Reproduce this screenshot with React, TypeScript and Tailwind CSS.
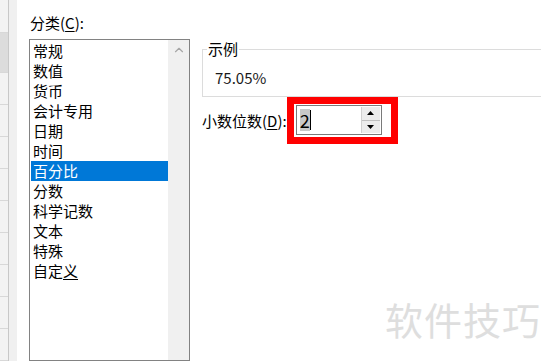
import { ChevronUp } from "lucide-react";

const categories = [
  "常规",
  "数值",
  "货币",
  "会计专用",
  "日期",
  "时间",
  "百分比",
  "分数",
  "科学记数",
  "文本",
  "特殊",
  "自定义",
];

function SheetEdge() {
  return (
    <div className="flex h-full shrink-0">
      <div className="flex w-[8px] flex-col bg-[#f3f3f3]">
        <div className="h-[33px] border-b border-[#d8d8d8]" />
        <div className="h-[40px] border-b border-[#d8d8d8] bg-[#dcdcdc]" />
        {Array.from({ length: 9 }).map((_, i) => (
          <div key={i} className="h-[32px] border-b border-[#d8d8d8]" />
        ))}
      </div>
      <div className="w-px bg-[#c8c8c8]" />
      <div className="w-[8px] bg-[#f0f0f0]" />
    </div>
  );
}

export default function App() {
  return (
    <div
      className="flex h-[361px] w-[541px] overflow-hidden bg-white text-[15px] leading-[20px] text-black"
      style={{ fontFamily: '"Noto Sans CJK SC", "Noto Sans", sans-serif' }}
    >
      <SheetEdge />

      {/* 分类 */}
      <div className="ml-[12px] flex w-[161px] shrink-0 flex-col pt-[13px]">
        <div className="mb-[6px] pl-px">
          分类(<span className="underline underline-offset-2">C</span>):
        </div>
        <div className="flex flex-1 border border-[#828282] bg-white">
          <ul className="flex flex-1 flex-col pt-px pl-px">
            {categories.map((c) => (
              <li
                key={c}
                className={
                  c === "百分比"
                    ? "h-[20px] bg-[#0078d7] pl-[2px] text-white"
                    : "h-[20px] pl-[2px]"
                }
              >
                {c === "自定义" ? (
                  <span>
                    自定<span className="underline underline-offset-2">义</span>
                  </span>
                ) : (
                  c
                )}
              </li>
            ))}
          </ul>
          <div className="flex w-[21px] justify-center bg-[#f0f0f0] pt-[3px]">
            <ChevronUp size={14} strokeWidth={2} className="text-[#a6a6a6]" />
          </div>
        </div>
      </div>

      {/* 右侧 */}
      <div className="ml-[12px] flex flex-1 flex-col pt-[49px]">
        <div className="relative -mr-4 h-[48px] border border-[#dcdcdc] pt-[18px] pl-[12px]">
          <span className="absolute -top-[11px] left-[4px] bg-white px-px">示例</span>
          <span className="text-[#1a1a1a]">75.05%</span>
        </div>

        <div className="flex items-center">
          <span>
            小数位数(<span className="underline underline-offset-2">D</span>):
          </span>
          <div className="border-[7px] border-[#ff0000] pt-px pr-[9px] pb-[2px] pl-[2px]">
            <div className="flex h-[30px] w-[86px] items-stretch border border-[#7a7a7a] bg-white py-px pr-px">
              <div className="flex flex-1 items-center pl-[3px]">
                <span className="bg-[#c8c8c8] text-[18px] leading-[22px]">2</span>
                <span className="h-[20px] w-px bg-black" />
              </div>
              <div className="flex w-[19px] flex-col border-l border-[#d0d0d0]">
                <div className="flex flex-1 items-center justify-center border-b border-[#c0c0c0] bg-[#ececec]">
                  <svg width="7" height="4" viewBox="0 0 7 4">
                    <path d="M0 4 L3.5 0 L7 4 Z" fill="#000" />
                  </svg>
                </div>
                <div className="flex flex-1 items-center justify-center bg-[#ececec]">
                  <svg width="7" height="4" viewBox="0 0 7 4">
                    <path d="M0 0 L3.5 4 L7 0 Z" fill="#000" />
                  </svg>
                </div>
              </div>
            </div>
          </div>
        </div>

        <div className="mt-auto mb-[20px] ml-[183px] text-[38px] leading-[44px] tracking-[1px] text-[#dedede]">
          软件技巧
        </div>
      </div>
    </div>
  );
}
